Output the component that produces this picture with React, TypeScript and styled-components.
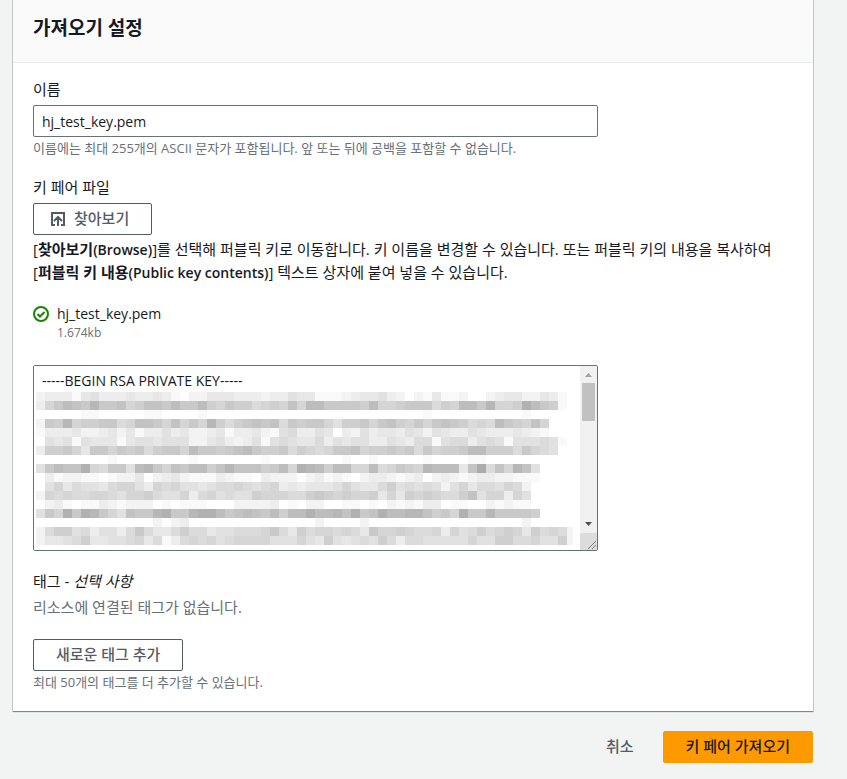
import React from 'react';
import styled, { createGlobalStyle } from 'styled-components';

const sans = '"Open Sans", "Noto Sans CJK KR", sans-serif';

const GlobalStyle = createGlobalStyle`
  *, *::before, *::after { box-sizing: border-box; }
  body {
    margin: 0;
    background: #f2f3f3;
    color: #16191f;
    font-family: ${sans};
    font-size: 15px;
    line-height: 22px;
    word-break: keep-all;
  }
  button, input, textarea { font: inherit; color: inherit; }
  strong { font-weight: 600; }
`;

const Page = styled.main`
  padding: 0 34px 16px 13px;
`;

const Card = styled.section`
  background: #fff;
  box-shadow: 0 1px 1px 0 rgba(0, 28, 36, 0.4), 0 0 0 1px rgba(0, 28, 36, 0.15);
`;

const CardHeader = styled.header`
  padding: 12px 20px 18px;
  background: #fafafa;
  border-bottom: 1px solid #eaeded;
`;

const Title = styled.h2`
  margin: 0;
  font-size: 19px;
  line-height: 32px;
  font-weight: 700;
`;

const CardBody = styled.div`
  display: flex;
  flex-direction: column;
  gap: 18px;
  padding: 15px 20px 19px;
`;

const Field = styled.div`
  display: flex;
  flex-direction: column;
  align-items: flex-start;
`;

const Label = styled.label`
  margin-bottom: 5px;
`;

const Hint = styled.p`
  margin: 1px 0 0;
  font-size: 13px;
  line-height: 20px;
  color: #687078;
`;

const Description = styled.p`
  margin: 3px 0 0;
`;

const Latin = styled.span`
  font-size: 14px;
`;

const Muted = styled.p`
  margin: 4px 0 21px;
  color: #687078;
`;

const TextInput = styled.input`
  width: 75%;
  max-width: 565px;
  height: 32px;
  padding: 4px 8px;
  border: 1px solid #687078;
  border-radius: 2px;
  background: #fff;
  font-size: 14px;
`;

const Button = styled.button<{ $kind?: 'normal' | 'primary' | 'link'; $withIcon?: boolean }>`
  display: inline-flex;
  align-items: center;
  justify-content: center;
  gap: 8px;
  height: 32px;
  padding: ${p => (p.$withIcon ? '0 22px 2px 16px' : p.$kind === 'link' ? '0 20px 2px' : '0 22px 2px')};
  border: 1px solid ${p => (p.$kind === 'primary' ? '#ff9900' : p.$kind === 'link' ? 'transparent' : '#545b64')};
  border-radius: 2px;
  background: ${p => (p.$kind === 'primary' ? '#ff9900' : p.$kind === 'link' ? 'transparent' : '#fff')};
  color: ${p => (p.$kind === 'primary' ? '#16191f' : '#545b64')};
  font-weight: 500;
`;

const UploadIcon = styled.svg`
  flex: none;
  width: 16px;
  height: 16px;
  margin-top: 2px;
`;

const FileRow = styled.div`
  display: flex;
  gap: 8px;
  margin-top: 19px;
  font-size: 14px;
`;

const StatusIcon = styled.svg`
  flex: none;
  width: 16px;
  height: 16px;
  margin-top: 3px;
`;

const FileSize = styled.div`
  font-size: 12px;
  line-height: 16px;
  color: #687078;
`;

const KeyBox = styled.div`
  position: relative;
  width: 75%;
  max-width: 565px;
  margin: 6px 0 1px;
`;

const KeyText = styled.textarea`
  display: block;
  width: 100%;
  height: 186px;
  padding: 4px 25px 4px 8px;
  border: 1px solid #687078;
  border-radius: 2px;
  background: #fff;
  font-size: 14px;
  resize: none;
  scrollbar-width: none;
`;

const Mosaic = styled.svg`
  position: absolute;
  left: 3px;
  top: 27px;
  width: 537px;
  height: 153px;
  pointer-events: none;
`;

const ScrollBar = styled.div`
  position: absolute;
  top: 1px;
  right: 1px;
  bottom: 1px;
  display: flex;
  flex-direction: column;
  width: 17px;
  background: #f1f1f1;
`;

const ScrollTrack = styled.div`
  flex: 1;
  padding: 0 2px;
`;

const ScrollThumb = styled.div`
  height: 38px;
  background: #c1c1c1;
`;

const ScrollPart = styled.svg<{ $corner?: boolean }>`
  display: block;
  width: 17px;
  height: 17px;
  background: ${p => (p.$corner ? '#dcdcdc' : 'transparent')};
`;

const Actions = styled.footer`
  display: flex;
  justify-content: flex-end;
  gap: 8px;
  margin-top: 20px;
`;

/* One hex digit per block: 0 is white, each step is six levels darker. */
const blocks = [
  '233314533343343102244433323354411123445320214112002344224310',
  '379ba9c99a78aa9b99b879886787a7bb99998b778999687bb9c778db9810',
  '000001100000110000100000000000000000000000010000000000100000',
  '298c7889967aa97a797c8689a9a698997588979a87979a98676b987a7000',
  '133342234241335342234133421563354032534435425433543334321000',
  '054515444145545552245323515654463545533543661566356515556510',
  '38897499798968997b9989ab98896876799a788989697889bb8886976500',
  '000000001000000001000000010000000010010000010000110000000000',
  '59baad76995bc97a9bb8acaaa89b7dcb8bb77b67987cbbb4ae6a7ca50000',
  '031221101224023421113211032220231210233212302321233221110000',
  '057465546775376755456676567343444575446856565257466576200000',
  '276766776577865573675655877766898787784748787668a57737500000',
  '023101132122201011100022223010220011010212133011002121100000',
  '597d9dc975a99cd99cddb9aba9b8bbdbbcad9adbbcca897d99c999980000',
  '000000000000020230000000000000020000200000000000000000200000',
  '268856355369644686645566679648677676497787667375686787486762',
  '244568445567461367675677775557548545658636655555755886675582',
];

const emptyLines = '\n'.repeat(28);

function RedactedKey() {
  return (
    <Mosaic viewBox="0 0 537 153" shapeRendering="crispEdges" aria-hidden="true">
      {blocks.map((row, y) =>
        row.split('').map((digit, x) => {
          const level = 255 - parseInt(digit, 16) * 6;
          return (
            <rect key={`${x}-${y}`} x={x * 9} y={y * 9} width="9" height="9" fill={`rgb(${level},${level},${level})`} />
          );
        })
      )}
    </Mosaic>
  );
}

function KeyScrollBar() {
  return (
    <ScrollBar aria-hidden="true">
      <ScrollPart viewBox="0 0 17 17">
        <path d="M5 11h7L8.500 7z" fill="#a3a3a3" />
      </ScrollPart>
      <ScrollTrack>
        <ScrollThumb />
      </ScrollTrack>
      <ScrollPart viewBox="0 0 17 17">
        <path d="M5 6h7L8.500 10z" fill="#505050" />
      </ScrollPart>
      <ScrollPart $corner viewBox="0 0 17 17">
        <path d="M8 16l8-8M12 16l4-4" stroke="#555" strokeDasharray="1 .4" />
      </ScrollPart>
    </ScrollBar>
  );
}

export default function App() {
  return (
    <>
      <GlobalStyle />
      <Page>
        <Card>
          <CardHeader>
            <Title>가져오기 설정</Title>
          </CardHeader>
          <CardBody>
            <Field>
              <Label htmlFor="key-name">이름</Label>
              <TextInput id="key-name" type="text" defaultValue="hj_test_key.pem" />
              <Hint>이름에는 최대 255개의 ASCII 문자가 포함됩니다. 앞 또는 뒤에 공백을 포함할 수 없습니다.</Hint>
            </Field>
            <Field>
              <Label htmlFor="key-file">키 페어 파일</Label>
              <Button id="key-file" type="button" $withIcon>
                <UploadIcon viewBox="0 0 16 16" fill="none" stroke="currentColor" strokeWidth="2" aria-hidden="true">
                  <path d="M5 14H2V2h12v12h-3M8 15V7M4 10l4-4 4 4" />
                </UploadIcon>
                찾아보기
              </Button>
              <Description>
                [<strong>찾아보기<Latin>(Browse)</Latin></strong>]를 선택해 퍼블릭 키로 이동합니다. 키 이름을 변경할 수 있습니다. 또는 퍼블릭 키의 내용을 복사하여 [<strong>퍼블릭 키 내용<Latin>(Public key contents)</Latin></strong>] 텍스트 상자에 붙여 넣을 수 있습니다.
              </Description>
              <FileRow>
                <StatusIcon viewBox="0 0 16 16" fill="none" stroke="#1d8102" strokeWidth="2" aria-hidden="true">
                  <circle cx="8" cy="8" r="7" />
                  <path d="M4.500 8l2.500 2.500L11.500 6" />
                </StatusIcon>
                <div>
                  <div>hj_test_key.pem</div>
                  <FileSize>1.674kb</FileSize>
                </div>
              </FileRow>
            </Field>
            <KeyBox>
              <KeyText aria-label="퍼블릭 키 내용" defaultValue={'-----BEGIN RSA PRIVATE KEY-----' + emptyLines} />
              <RedactedKey />
              <KeyScrollBar />
            </KeyBox>
            <Field>
              <div>
                태그 - <em>선택 사항</em>
              </div>
              <Muted>리소스에 연결된 태그가 없습니다.</Muted>
              <Button type="button">새로운 태그 추가</Button>
              <Hint>최대 50개의 태그를 더 추가할 수 있습니다.</Hint>
            </Field>
          </CardBody>
        </Card>
        <Actions>
          <Button type="button" $kind="link">취소</Button>
          <Button type="submit" $kind="primary">키 페어 가져오기</Button>
        </Actions>
      </Page>
    </>
  );
}
